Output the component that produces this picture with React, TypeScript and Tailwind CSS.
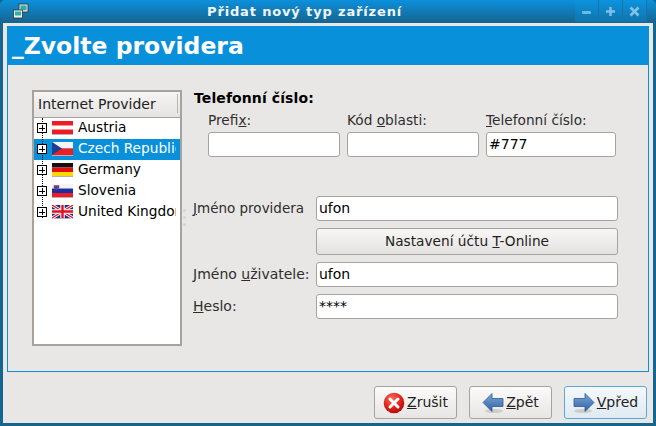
import type { ReactNode } from "react";

function Flag({ children }: { children: ReactNode }) {
  return (
    <svg width="21" height="14" viewBox="0 0 21 14" className="shrink-0">
      <rect x="0" y="13" width="21" height="1" fill="#b5b3b1" />
      <g>{children}</g>
    </svg>
  );
}

const FLAGS: Record<string, ReactNode> = {
  Austria: (
    <>
      <rect width="21" height="13" fill="#f01c24" />
      <rect y="4.5" width="21" height="4" fill="#fff" />
    </>
  ),
  "Czech Republic": (
    <>
      <rect width="21" height="6.5" fill="#f4f4f8" />
      <rect y="6.5" width="21" height="6.5" fill="#ee1c25" />
      <path d="M0 0 L10 6.5 L0 13 Z" fill="#1c3f94" />
    </>
  ),
  Germany: (
    <>
      <rect width="21" height="4.5" fill="#111" />
      <rect y="4.5" width="21" height="4.5" fill="#e01010" />
      <rect y="9" width="21" height="4" fill="#ffd800" />
    </>
  ),
  Slovenia: (
    <>
      <rect width="21" height="4.5" fill="#f4f4f8" />
      <rect y="4.5" width="21" height="4.5" fill="#1c2fa0" />
      <rect y="9" width="21" height="4" fill="#ee1c25" />
      <path d="M2 1.5 H7 V4 Q4.5 7 2 4 Z" fill="#3050b0" stroke="#e03030" strokeWidth="0.6" />
    </>
  ),
  "United Kingdom": (
    <>
      <rect width="21" height="13" fill="#1f2f80" />
      <path d="M0 0 L21 13 M21 0 L0 13" stroke="#fff" strokeWidth="3" />
      <path d="M0 0 L21 13 M21 0 L0 13" stroke="#e01020" strokeWidth="1.2" />
      <path d="M10.5 0 V13 M0 6.5 H21" stroke="#fff" strokeWidth="4.4" />
      <path d="M10.5 0 V13 M0 6.5 H21" stroke="#e01020" strokeWidth="2.4" />
    </>
  ),
};

const ROWS = ["Austria", "Czech Republic", "Germany", "Slovenia", "United Kingdom"];

function Expander() {
  return (
    <span className="relative z-10 flex h-[10px] w-[10px] shrink-0 items-center justify-center border border-black bg-white">
      <span className="absolute h-px w-[6px] bg-black" />
      <span className="absolute h-[6px] w-px bg-black" />
    </span>
  );
}

function TreeRow({ name, selected }: { name: string; selected: boolean }) {
  return (
    <div className={`flex h-[21px] items-center overflow-hidden pb-[1px] text-[13.7px] ${selected ? "bg-[#0890db] text-white" : "text-black"}`}>
      <span className="ml-[3px] mr-[5px] flex">
        <Expander />
      </span>
      <Flag>{FLAGS[name]}</Flag>
      <span className="-mt-[2px] ml-[5px] w-[98px] overflow-hidden whitespace-nowrap">{name}</span>
    </div>
  );
}

function Entry({ value, className }: { value?: string; className: string }) {
  return (
    <div className={`h-[25px] rounded-[3px] border border-[#a8a29f] bg-white pl-[2px] text-[14px] leading-[23px] text-black ${className}`}>
      {value}
    </div>
  );
}

function PhoneField({ label, value, className }: { label: ReactNode; value?: string; className: string }) {
  return (
    <div className="flex flex-col">
      <div className="h-[23px] text-[13.7px] leading-[22px] text-[#2e2e2e]">{label}</div>
      <Entry value={value} className={className} />
    </div>
  );
}

function FormRow({ label, children, small }: { label: ReactNode; children: ReactNode; small?: boolean }) {
  return (
    <div className="flex items-center">
      <div className={`-ml-px w-[123px] whitespace-nowrap text-[#2e2e2e] ${small ? "text-[13.5px]" : ""}`}>{label}</div>
      {children}
    </div>
  );
}

function CancelIcon() {
  return (
    <svg width="22" height="22" viewBox="0 0 22 22">
      <defs>
        <radialGradient id="red" cx="0.4" cy="0.3" r="0.8">
          <stop offset="0" stopColor="#f87060" />
          <stop offset="0.6" stopColor="#dc1c14" />
          <stop offset="1" stopColor="#a00808" />
        </radialGradient>
      </defs>
      <circle cx="11" cy="11" r="10.3" fill="url(#red)" />
      <path d="M7 7 L15 15 M15 7 L7 15" stroke="#fff" strokeWidth="3" strokeLinecap="round" />
    </svg>
  );
}

function ArrowIcon({ right }: { right?: boolean }) {
  return (
    <svg width="22" height="22" viewBox="0 0 22 22" className={right ? "-scale-x-100" : ""}>
      <defs>
        <linearGradient id="arrow" x1="0" y1="0" x2="0" y2="1">
          <stop offset="0" stopColor="#7ea6d6" />
          <stop offset="1" stopColor="#2f62a4" />
        </linearGradient>
      </defs>
      <ellipse cx="12" cy="19" rx="9" ry="2" fill="#cfcdcb" />
      <path d="M1 10.5 L10 1.5 V6.5 H21 V14.5 H10 V19.5 Z" fill="url(#arrow)" stroke="#2a5a98" strokeWidth="0.8" strokeLinejoin="round" />
    </svg>
  );
}

function FooterButton({ icon, label, focused }: { icon: ReactNode; label: ReactNode; focused?: boolean }) {
  return (
    <button
      className={`flex h-[33px] w-[83px] items-center justify-center gap-[2px] rounded-[3px] border text-[14px] text-[#222] ${
        focused
          ? "border-[#5da9d6] bg-gradient-to-b from-[#f4f8fb] to-[#dfeaf2]"
          : "border-[#a8a29f] bg-gradient-to-b from-[#fbfafa] to-[#e8e6e4]"
      }`}
    >
      {icon}
      <span>{label}</span>
    </button>
  );
}

function WindowButton({ children }: { children: ReactNode }) {
  return (
    <div className="flex h-[22px] w-[24px] items-center justify-center border-r border-[#1474a8] bg-gradient-to-b from-[#0c93df] to-[#0f74ac]">
      {children}
    </div>
  );
}

export default function App() {
  return (
    <div
      className="flex h-[426px] w-[656px] flex-col overflow-hidden bg-[#14668f] text-[14px]"
      style={{ fontFamily: '"DejaVu Sans", sans-serif' }}
    >
      {/* title bar */}
      <div className="relative flex h-[23px] shrink-0 items-center rounded-t-[5px] bg-gradient-to-b from-[#0a90dc] to-[#14648f] pl-[207px]">
        <svg width="17" height="16" viewBox="0 0 17 16" className="absolute left-[12px] top-[3px]">
          <rect x="7" y="1" width="9" height="8" fill="#d8e0e0" stroke="#334" strokeWidth="0.8" />
          <rect x="8.5" y="2.5" width="6" height="4.5" fill="#2bb0a8" />
          <rect x="1.5" y="7" width="9" height="8" fill="#eeeeea" stroke="#333" strokeWidth="0.8" />
          <rect x="3" y="8.5" width="6" height="4" fill="#25b0b0" />
        </svg>
        <span className="text-[13px] font-bold tracking-[0.85px] text-[#f0f6fa]">Přidat nový typ zařízení</span>
        <div className="absolute right-[9px] top-0 flex">
          <WindowButton>
            <span className="mt-[2px] h-[3px] w-[9px] rounded-[1px] bg-[#6fb8de]" />
          </WindowButton>
          <WindowButton>
            <svg width="11" height="11" viewBox="0 0 11 11">
              <path d="M5.5 1 V10 M1 5.5 H10" stroke="#7fc2e4" strokeWidth="2.4" />
            </svg>
          </WindowButton>
          <WindowButton>
            <svg width="11" height="11" viewBox="0 0 11 11">
              <path d="M1.5 1.5 L9.5 9.5 M9.5 1.5 L1.5 9.5" stroke="#7fc2e4" strokeWidth="2.6" />
            </svg>
          </WindowButton>
        </div>
      </div>

      {/* window body */}
      <div className="mx-[3px] mb-[3px] flex grow flex-col bg-[#e9e7e5] pt-[3px]">
        <div className="ml-[4px] mr-[4px] flex h-[346px] flex-col border border-[#0890db]">
          <div className="h-[38px] shrink-0 bg-[#0890db] pl-[4px] text-[23.5px] font-bold leading-[39px] text-white">
            _Zvolte providera
          </div>

          <div className="flex grow pl-[24px] pt-[25px]">
            {/* provider tree */}
            <div className="relative flex h-[256px] w-[150px] shrink-0 flex-col border-2 border-[#a8a29f] bg-white">
              <div className="h-[26px] shrink-0 border-b border-[#a8a29f] bg-gradient-to-b from-[#f6f5f4] to-[#e6e4e2] pl-[4px] leading-[24px] text-[#222]">
                Internet Provider
                <span className="absolute right-[2px] top-[2px] h-[19px] w-px bg-[#b8b5b2]" />
              </div>
              <div className="absolute bottom-[126px] left-[8px] top-[26px] w-0 border-l border-dotted border-black" />
              {ROWS.map((r) => (
                <TreeRow key={r} name={r} selected={r === "Czech Republic"} />
              ))}
              {/* pane grip */}
              <div className="absolute left-[149px] top-[117px] flex flex-col gap-[4px]">
                <span className="h-[3px] w-[3px] rounded-full bg-[#d6d4d2]" />
                <span className="h-[3px] w-[3px] rounded-full bg-[#d6d4d2]" />
                <span className="h-[3px] w-[3px] rounded-full bg-[#d6d4d2]" />
              </div>
            </div>

            {/* form */}
            <div className="ml-[12px] flex grow flex-col">
              <div className="h-[19px] font-bold leading-[17px] tracking-[0.1px] text-black">Telefonní číslo:</div>
              <div className="flex gap-[7px] pl-[14px]">
                <PhoneField label={<>Prefi<u>x</u>:</>} className="w-[132px]" />
                <PhoneField label={<>Kód <u>o</u>blasti:</>} className="w-[132px]" />
                <PhoneField label={<><u>T</u>elefonní číslo:</>} value="#777" className="w-[130px]" />
              </div>

              <div className="mt-[39px] flex flex-col">
                <FormRow small label={<><u>J</u>méno providera</>}>
                  <Entry value="ufon" className="w-[302px]" />
                </FormRow>
                <div className="mt-[7px] pl-[122px]">
                  <button className="h-[27px] w-[302px] rounded-[3px] border border-[#a8a29f] bg-gradient-to-b from-[#f8f7f6] to-[#e4e2e0] text-[13.7px] text-[#222]">
                    Nastavení účtu <u>T</u>-Online
                  </button>
                </div>
                <div className="mt-[7px]">
                  <FormRow label={<>Jméno <u>u</u>živatele:</>}>
                    <Entry value="ufon" className="w-[302px]" />
                  </FormRow>
                </div>
                <div className="mt-[7px]">
                  <FormRow label={<><u>H</u>eslo:</>}>
                    <Entry value="****" className="w-[302px]" />
                  </FormRow>
                </div>
              </div>
            </div>
          </div>
        </div>

        {/* footer buttons */}
        <div className="mt-[14px] flex justify-end gap-[12px] pr-[6px]">
          <FooterButton icon={<CancelIcon />} label={<><u>Z</u>rušit</>} />
          <FooterButton icon={<ArrowIcon />} label={<><u>Z</u>pět</>} />
          <FooterButton icon={<ArrowIcon right />} label={<><u>V</u>před</>} focused />
        </div>
      </div>
    </div>
  );
}
